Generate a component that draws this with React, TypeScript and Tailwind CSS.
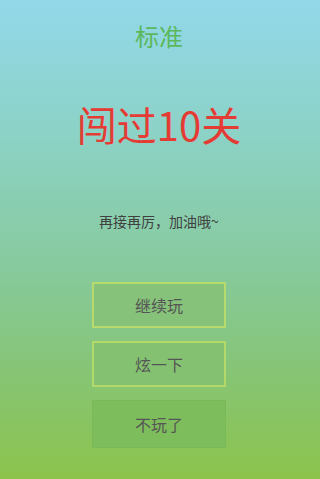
export default function App() {
  const font = "font-['Noto_Sans_CJK_SC','Noto_Sans',sans-serif]";

  return (
    <div className="h-[479px] w-full overflow-hidden bg-[linear-gradient(to_bottom,#92d8ea_0%,#8cd2c6_28%,#87ca9e_55%,#86c57a_75%,#8cc34c_100%)]">
      <div className={`${font} flex w-[300px] flex-col items-center pl-[18px]`}>
        <h2 className="mt-[23px] text-[24px] leading-[26px] text-[#5cb85c]">标准</h2>

        <h1 className="mt-[53px] text-[40px] leading-[44px] text-[#e53b35]">闯过10关</h1>

        <p className="mt-[67px] text-[14px] leading-[16px] text-[#404040]">再接再厉，加油哦~</p>

        <div className="mt-[53px] flex flex-col gap-[13px]">
          <button className="flex h-[46px] w-[134px] items-center justify-center border-2 border-[#b6da6c] bg-[#86c27a] text-[16px] text-[#555]">
            继续玩
          </button>
          <button className="flex h-[46px] w-[134px] items-center justify-center border-2 border-[#b3d96a] bg-[#84c271] text-[16px] text-[#555]">
            炫一下
          </button>
          <button className="flex h-[48px] w-[134px] items-center justify-center border border-[#79b95a] bg-[#7dbd5c] text-[16px] text-[#555]">
            不玩了
          </button>
        </div>
      </div>
    </div>
  );
}
